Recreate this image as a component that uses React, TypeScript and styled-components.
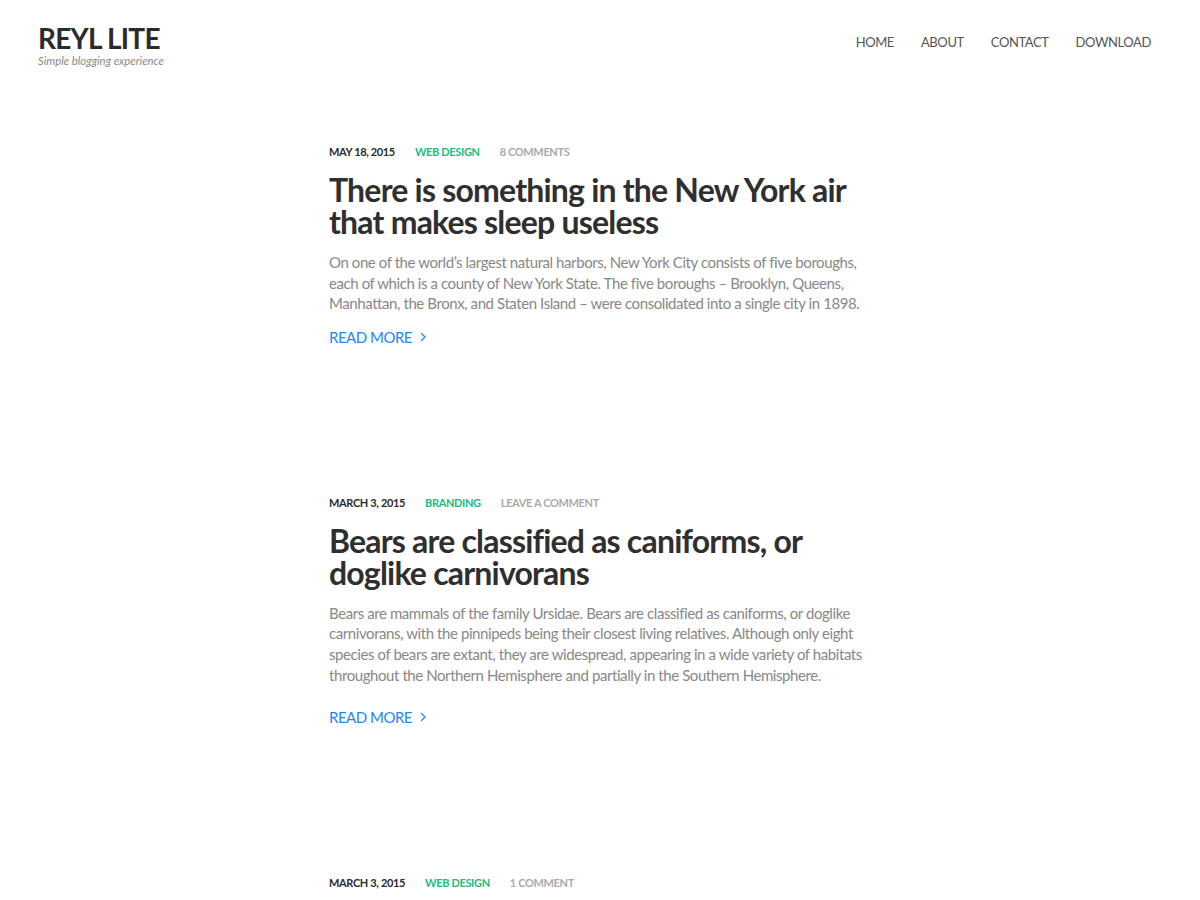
import React from "react";
import styled, { createGlobalStyle } from "styled-components";

const GlobalStyle = createGlobalStyle`
  html, body {
    margin: 0;
    padding: 0;
    background: #fff;
    font-family: Lato, "Open Sans", "Liberation Sans", sans-serif;
    -webkit-font-smoothing: antialiased;
  }
  * { box-sizing: border-box; }
`;

interface Post {
  date: string;
  category: string;
  comments: string;
  title: string;
  excerpt: string;
  fullContent?: boolean;
}

const posts: Post[] = [
  {
    date: "May 18, 2015",
    category: "Web Design",
    comments: "8 Comments",
    title: "There is something in the New York air that makes sleep useless",
    excerpt:
      "On one of the world’s largest natural harbors, New York City consists of five boroughs, each of which is a county of New York State. The five boroughs – Brooklyn, Queens, Manhattan, the Bronx, and Staten Island – were consolidated into a single city in 1898.",
  },
  {
    date: "March 3, 2015",
    category: "Branding",
    comments: "Leave a comment",
    title: "Bears are classified as caniforms, or doglike carnivorans",
    excerpt:
      "Bears are mammals of the family Ursidae. Bears are classified as caniforms, or doglike carnivorans, with the pinnipeds being their closest living relatives. Although only eight species of bears are extant, they are widespread, appearing in a wide variety of habitats throughout the Northern Hemisphere and partially in the Southern Hemisphere.",
    fullContent: true,
  },
  {
    date: "March 3, 2015",
    category: "Web Design",
    comments: "1 Comment",
    title: "Life is like riding a bicycle. To keep your balance you must keep moving",
    excerpt:
      "A bicycle, often called a bike or cycle, is a human-powered, pedal-driven, single-track vehicle, having two wheels attached to a frame, one behind the other.",
  },
];

const nav = ["Home", "About", "Contact", "Download"];

const Chevron = () => (
  <svg width="8" height="10" viewBox="0 0 8 10" fill="none">
    <path d="M2.5 1.5 L6 5 L2.5 8.5" stroke="#1e88f5" strokeWidth="1.3" strokeLinecap="round" strokeLinejoin="round" />
  </svg>
);

const App = () => {
  return (
    <Page>
      <GlobalStyle />
      <Header>
        <Brand>
          <Logo>REYL LITE</Logo>
          <Tagline>Simple blogging experience</Tagline>
        </Brand>
        <Nav>
          {nav.map((item) => (
            <NavLink key={item} href="#">
              {item}
            </NavLink>
          ))}
        </Nav>
      </Header>
      <Main>
        {posts.map((post) => (
          <Article key={post.title}>
            <Meta>
              <MetaDate>{post.date}</MetaDate>
              <MetaCategory href="#">{post.category}</MetaCategory>
              <MetaComments href="#">{post.comments}</MetaComments>
            </Meta>
            <Title>{post.title}</Title>
            <Excerpt $full={post.fullContent}>{post.excerpt}</Excerpt>
            <ReadMore href="#">
              Read more <Chevron />
            </ReadMore>
          </Article>
        ))}
      </Main>
    </Page>
  );
};

export default App;

const Page = styled.div`
  min-height: 900px;
`;

const Header = styled.header`
  display: flex;
  justify-content: space-between;
  align-items: flex-start;
  padding: 22px 49px 0 38px;
`;

const Brand = styled.div`
  display: flex;
  flex-direction: column;
`;

const Logo = styled.h1`
  margin: 0;
  font-size: 28px;
  line-height: 32px;
  font-weight: 700;
  color: #2b2b2b;
  letter-spacing: -0.75px;
`;

const Tagline = styled.p`
  margin: 0;
  font-size: 11.3px;
  line-height: 13px;
  font-style: italic;
  color: #888;
`;

const Nav = styled.nav`
  display: flex;
  gap: 27px;
  padding-top: 12px;
`;

const NavLink = styled.a`
  font-size: 13px;
  line-height: 16px;
  letter-spacing: -0.4px;
  text-transform: uppercase;
  color: #555;
  text-decoration: none;
`;

const Main = styled.main`
  max-width: 542px;
  margin: 0 auto;
  padding-top: 77px;
`;

const Article = styled.article`
  margin-bottom: 148px;
`;

const Meta = styled.div`
  display: flex;
  gap: 20px;
  font-size: 11px;
  line-height: 16px;
  font-weight: 700;
  letter-spacing: -0.35px;
  text-transform: uppercase;
`;

const MetaDate = styled.span`
  color: #2b2b2b;
`;

const MetaCategory = styled.a`
  color: #1bbc80;
  text-decoration: none;
`;

const MetaComments = styled.a`
  color: #aaa;
  text-decoration: none;
`;

const Title = styled.h2`
  margin: 14px 0 0;
  font-size: 32px;
  line-height: 32px;
  font-weight: 700;
  letter-spacing: -0.8px;
  color: #2f2f2f;
`;

const Excerpt = styled.p<{ $full?: boolean }>`
  margin: 14px 0 ${(p) => (p.$full ? "9px" : "0")};
  font-size: 15px;
  line-height: 20.6px;
  letter-spacing: -0.42px;
  color: #888;
`;

const ReadMore = styled.a`
  display: inline-flex;
  align-items: center;
  gap: 7px;
  margin-top: 13px;
  font-size: 15px;
  line-height: 20px;
  letter-spacing: -0.5px;
  text-transform: uppercase;
  color: #1e88f5;
  text-decoration: none;
`;
